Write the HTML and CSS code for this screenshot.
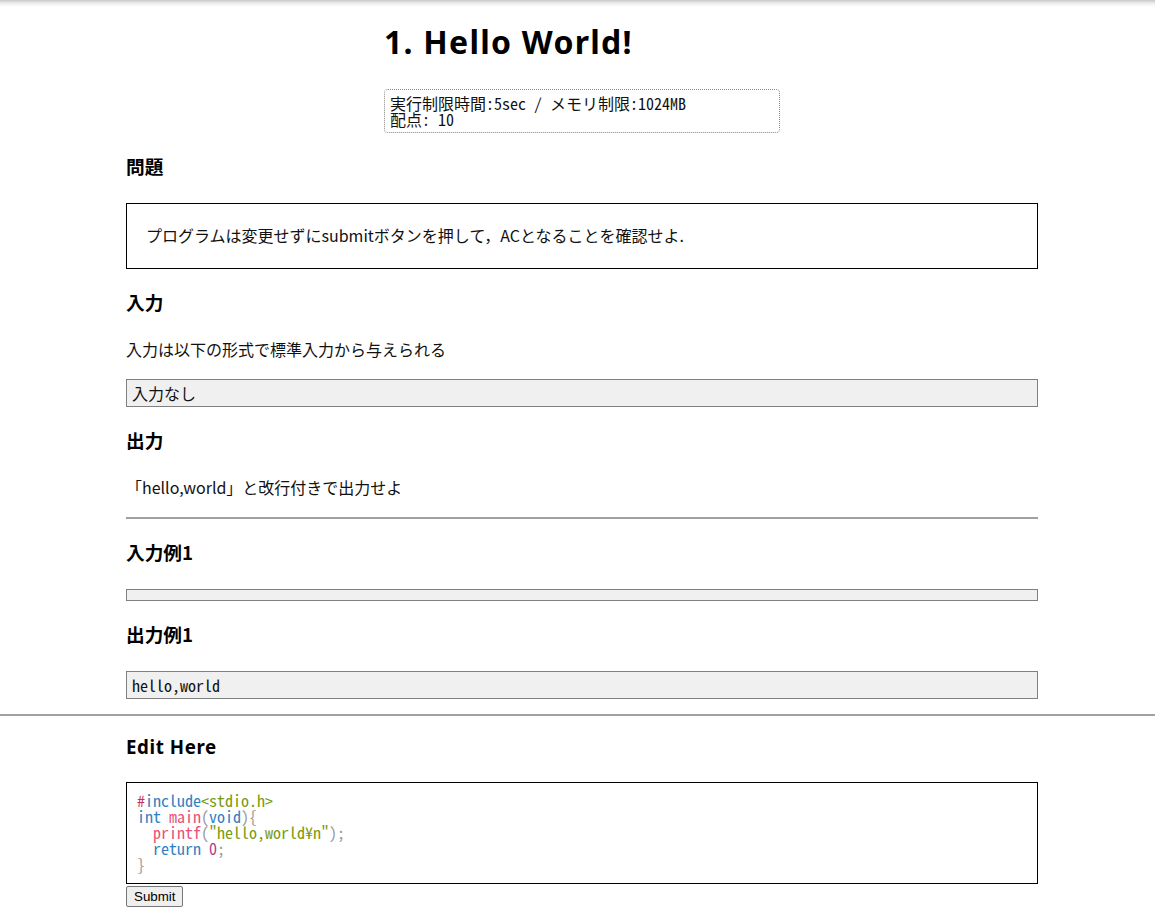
FILE: index.html
```html
<!DOCTYPE html>
<html lang="ja">
<head>
<meta charset="utf-8">
<title>1. Hello World!</title>
<link rel="stylesheet" href="styles.css">
</head>
<body>
<div class="topshade"></div>
<main class="page">
  <div class="head">
    <h1 class="title">1. Hello World!</h1>
    <pre class="limits">実行制限時間:5sec / メモリ制限:1024MB
配点: 10</pre>
  </div>

  <h3 class="sec sec-first">問題</h3>
  <div class="statement">プログラムは変更せずにsubmitボタンを押して，ACとなることを確認せよ.</div>

  <h3 class="sec">入力</h3>
  <p class="text">入力は以下の形式で標準入力から与えられる</p>
  <pre class="sample sample-after-text">入力なし</pre>

  <h3 class="sec">出力</h3>
  <p class="text">「hello,world」と改行付きで出力せよ</p>
  <hr class="rule">

  <h3 class="sec">入力例1</h3>
  <pre class="sample"></pre>

  <h3 class="sec">出力例1</h3>
  <pre class="sample">hello,world</pre>
</main>
<hr class="rule-full">
<section class="page editor">
  <h3 class="sec sec-edit">Edit Here</h3>
  <pre class="code"><span class="c-pre">#</span><span class="c-kw">include</span><span class="c-str">&lt;stdio.h&gt;</span>
<span class="c-kw">int</span> <span class="c-fn">main</span><span class="c-pun">(</span><span class="c-kw">void</span><span class="c-pun">){</span>
  <span class="c-fn">printf</span><span class="c-pun">(</span><span class="c-str">"hello,world¥n"</span><span class="c-pun">);</span>
  <span class="c-kw">return</span> <span class="c-num">0</span><span class="c-pun">;</span>
<span class="c-pun">}</span></pre>
  <button class="submit" type="button">Submit</button>
</section>
</body>
</html>
```

FILE: styles.css
```css
html, body {
  margin: 0;
  padding: 0;
  background: #fff;
}
body {
  font-family: "Noto Sans CJK JP", "Noto Sans", sans-serif;
  color: #111;
  font-size: 16px;
}
.topshade {
  height: 7px;
  background: linear-gradient(#c8c8c8, #ececec 45%, #fff);
}
.page {
  margin-left: 126px;
  width: 912px;
}
.head {
  width: 396px;
  margin: 0 auto;
}
.title {
  margin: 15px 0 0 0;
  font-family: "Noto Sans", "Noto Sans CJK JP", sans-serif;
  font-size: 32px;
  line-height: 40px;
  letter-spacing: 1.25px;
  font-weight: bold;
  color: #000;
}
pre, .code {
  font-family: "Noto Sans Mono CJK JP", "Liberation Mono", monospace;
}
.limits {
  margin: 27px 0 0 0;
  padding: 5px 4px 5px 5px;
  border: 1px dotted #888;
  border-radius: 4px;
  font-size: 16px;
  line-height: 16px;
  color: #111;
}
.sec {
  margin: 21px 0 0 0;
  padding-bottom: 1px;
  font-size: 18.7px;
  line-height: 24px;
  font-weight: bold;
  color: #000;
}
.sec-first {
  margin-top: 21px;
}
.statement {
  margin-top: 24px;
  border: 1px solid #000;
  padding: 19px 19px 21px;
  line-height: 24px;
}
.text {
  margin: 22px 0 0 0;
  padding-bottom: 1px;
  line-height: 24px;
}
.sample {
  margin: 24px 0 0 0;
  background: #f0f0f0;
  border: 1px solid #808080;
  padding: 5px 5px;
  font-size: 16px;
  line-height: 16px;
  color: #111;
}
.sample-after-text {
  margin-top: 17px;
}
.rule {
  margin: 17px 0 0 0;
  border: 0;
  border-top: 2px solid #a0a0a0;
  height: 0;
}
.rule-full {
  margin: 15px 0 0 0;
  border: 0;
  border-top: 2px solid #a0a0a0;
  height: 0;
}
.sec-edit {
  margin-top: 19px;
  font-family: "Noto Sans", "Noto Sans CJK JP", sans-serif;
  letter-spacing: 0.6px;
}
.code {
  margin: 22px 0 0 0;
  border: 1px solid #000;
  padding: 9px 10px 11px;
  font-size: 16px;
  line-height: 16px;
  color: #999;
}
.c-pre { color: #c8305a; }
.c-kw { color: #2f7fbf; }
.c-str { color: #7a9a10; }
.c-fn { color: #e8507a; }
.c-pun { color: #999; }
.c-num { color: #b03a8a; }
.submit {
  display: block;
  margin-top: 2px;
  font-family: "Liberation Sans", Arial, sans-serif;
  font-size: 13.33px;
  line-height: 15px;
  padding: 2px 7px;
  border: 1px solid #767676;
  border-radius: 2px;
  background: #efefef;
  color: #000;
}
```
